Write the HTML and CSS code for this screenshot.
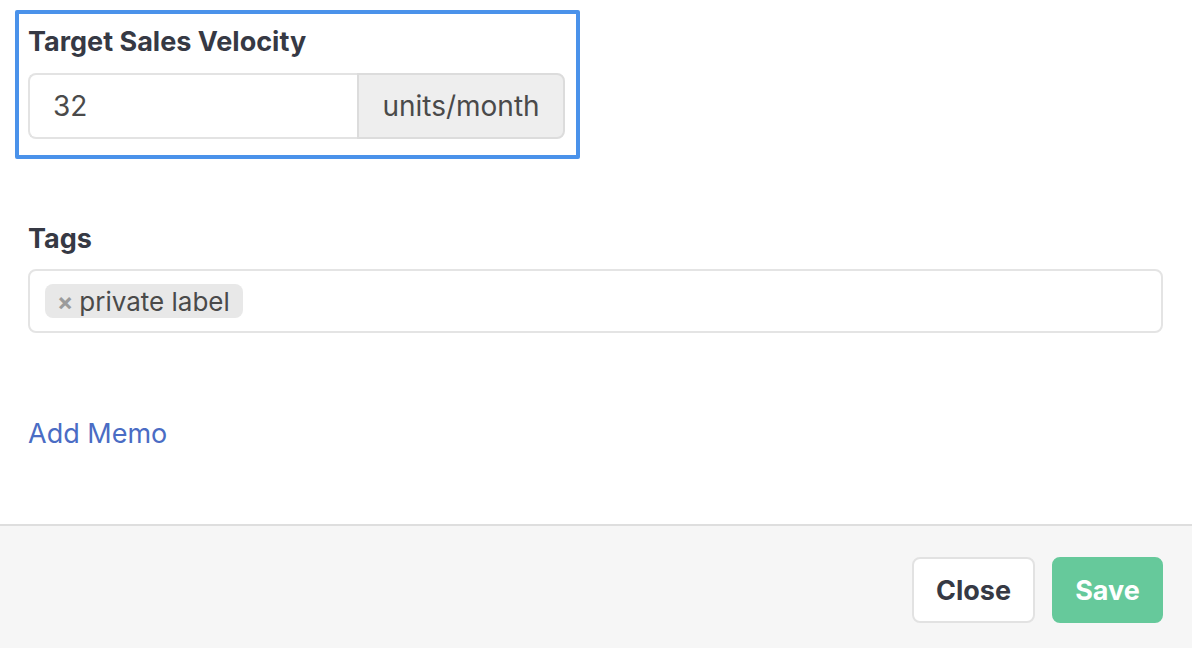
FILE: index.html
```html
<!DOCTYPE html>
<html>
<head>
<meta charset="utf-8">
<link rel="stylesheet" href="styles.css">
</head>
<body>
<div class="modal-body">
  <div class="form-group focused">
    <label class="label">Target Sales Velocity</label>
    <div class="input-group">
      <div class="input">32</div>
      <div class="addon">units/month</div>
    </div>
  </div>
  <div class="form-group tags-group">
    <label class="label">Tags</label>
    <div class="tags-box">
      <span class="tag"><span class="tag-x">×</span>private label</span>
    </div>
  </div>
  <a class="add-memo">Add Memo</a>
</div>
<div class="modal-footer">
  <button class="btn btn-close">Close</button>
  <button class="btn btn-save">Save</button>
</div>
</body>
</html>
```
FILE: styles.css
```css
html, body {
  margin: 0;
  padding: 0;
  background: #ffffff;
  font-family: Inter, "Noto Sans", "Liberation Sans", sans-serif;
  color: #363944;
}
.modal-body {
  height: 524px;
  box-sizing: border-box;
  padding: 10px 29px 0 15px;
}
.form-group {
  display: flex;
  flex-direction: column;
}
.focused {
  width: 565px;
  box-sizing: border-box;
  border: 4px solid #4a92ea;
  border-radius: 2px;
  padding: 12px 11px 16px 9px;
}
.label {
  font-size: 27px;
  font-weight: 700;
  line-height: 32px;
  color: #363944;
}
.input-group {
  margin-top: 15px;
  display: flex;
  height: 66px;
}
.input {
  flex: 1;
  border: 2px solid #e3e3e3;
  border-right: none;
  border-radius: 8px 0 0 8px;
  padding-left: 23px;
  display: flex;
  align-items: center;
  font-size: 28px;
  color: #4a4a4a;
}
.addon {
  width: 208px;
  box-sizing: border-box;
  background: #eeeeee;
  border: 2px solid #dcdcdc;
  border-radius: 0 8px 8px 0;
  display: flex;
  align-items: center;
  justify-content: center;
  font-size: 28px;
  color: #4a4a4a;
}
.tags-group {
  margin-top: 64px;
  margin-left: 13px;
}
.tags-box {
  margin-top: 14px;
  height: 64px;
  box-sizing: border-box;
  border: 2px solid #e4e4e4;
  border-radius: 8px;
  padding: 13px 15px;
  display: flex;
  align-items: flex-start;
}
.tag {
  background: #e8e8e8;
  border-radius: 8px;
  height: 34px;
  padding: 0 13px 0 12px;
  display: inline-flex;
  align-items: center;
  font-size: 26px;
  color: #4a4a4a;
}
.tag-x {
  color: #9b9b9b;
  font-size: 24px;
  font-weight: 700;
  margin-right: 6px;
}
.add-memo {
  display: block;
  margin: 84px 0 0 13px;
  font-size: 27px;
  line-height: 34px;
  color: #4a6cc4;
  cursor: pointer;
}
.modal-footer {
  border-top: 2px solid #dedede;
  background: #f6f6f6;
  height: 124px;
  box-sizing: border-box;
  padding: 31px 29px 0 0;
  display: flex;
  justify-content: flex-end;
  gap: 17px;
}
.btn {
  height: 66px;
  border-radius: 8px;
  font-family: Inter, "Noto Sans", "Liberation Sans", sans-serif;
  font-size: 27px;
  font-weight: 700;
  cursor: pointer;
}
.btn-close {
  width: 123px;
  background: #ffffff;
  border: 2px solid #e2e2e2;
  color: #363944;
}
.btn-save {
  width: 111px;
  background: #66c99b;
  border: 2px solid #66c99b;
  color: #ffffff;
}
```
